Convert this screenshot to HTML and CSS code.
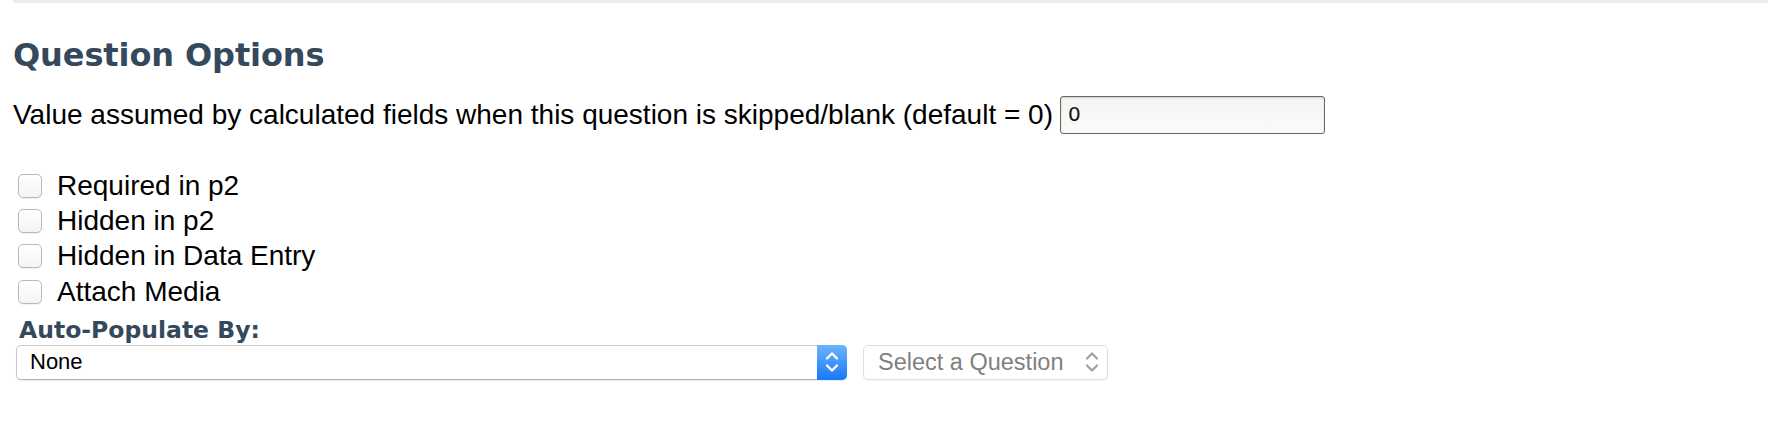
FILE: index.html
```html
<!DOCTYPE html>
<html>
<head>
<meta charset="utf-8">
<link rel="stylesheet" href="styles.css">
</head>
<body>
<div class="panel">
  <div class="topline"></div>
  <h2 class="title">Question Options</h2>
  <div class="value-row">
    <span class="value-label">Value assumed by calculated fields when this question is skipped/blank (default = 0)</span>
    <span class="text-input">0</span>
  </div>
  <ul class="checks">
    <li class="check-item"><span class="cb"></span><span class="check-label">Required in p2</span></li>
    <li class="check-item"><span class="cb"></span><span class="check-label">Hidden in p2</span></li>
    <li class="check-item"><span class="cb"></span><span class="check-label">Hidden in Data Entry</span></li>
    <li class="check-item"><span class="cb"></span><span class="check-label">Attach Media</span></li>
  </ul>
  <div class="sublabel">Auto-Populate By:</div>
  <div class="selects">
    <div class="select primary">
      <span class="select-text">None</span>
      <span class="arrow-box">
        <svg width="16" height="26" viewBox="0 0 16 26"><path d="M3 9.5 L8 4.5 L13 9.5 M3 16.5 L8 21.5 L13 16.5" fill="none" stroke="#fff" stroke-width="2.4" stroke-linecap="round" stroke-linejoin="round"/></svg>
      </span>
    </div>
    <div class="select secondary">
      <span class="select-text muted">Select a Question</span>
      <span class="arrow-plain">
        <svg width="16" height="26" viewBox="0 0 16 26"><path d="M3 9.5 L8 4.5 L13 9.5 M3 16.5 L8 21.5 L13 16.5" fill="none" stroke="#a0a0a0" stroke-width="2.2" stroke-linecap="round" stroke-linejoin="round"/></svg>
      </span>
    </div>
  </div>
</div>
</body>
</html>
```

FILE: styles.css
```css
html, body {
  margin: 0;
  padding: 0;
  background: #ffffff;
}

body {
  font-family: "Liberation Sans", Arial, sans-serif;
  color: #000;
  width: 1768px;
  height: 424px;
  overflow: hidden;
}

.panel {
  padding-left: 13px;
}

.topline {
  height: 0;
  border-top: 3px solid #ececec;
}

.title {
  font-family: "DejaVu Sans", Verdana, sans-serif;
  font-weight: bold;
  font-size: 32px;
  line-height: 38px;
  color: #34495b;
  margin: 33px 0 0 0;
  letter-spacing: -0.1px;
}

.value-row {
  display: flex;
  align-items: center;
  height: 38px;
  margin-top: 22px;
  font-size: 28px;
}

.value-label {
  line-height: 32px;
}

.text-input {
  box-sizing: border-box;
  width: 265px;
  height: 38px;
  margin-left: 7px;
  border: 1.5px solid #666;
  border-radius: 3px;
  background: linear-gradient(#f3f3f1, #fbfbfa);
  box-shadow: inset 0 1px 2px rgba(0,0,0,0.15);
  font-family: "DejaVu Sans", sans-serif;
  font-size: 20px;
  line-height: 35px;
  padding-left: 7px;
  color: #111;
}

.checks {
  list-style: none;
  margin: 34px 0 0 0;
  padding: 0;
}

.check-item {
  display: flex;
  align-items: center;
  height: 35.4px;
  font-size: 28px;
}

.cb {
  box-sizing: border-box;
  width: 24px;
  height: 24px;
  margin-left: 5px;
  border: 1px solid #b9b9b9;
  border-radius: 5px;
  background: linear-gradient(#ffffff, #f4f4f4);
  box-shadow: 0 1px 1px rgba(0,0,0,0.06);
}

.check-label {
  margin-left: 15px;
  line-height: 32px;
}

.sublabel {
  font-family: "DejaVu Sans", Verdana, sans-serif;
  font-weight: bold;
  font-size: 23.5px;
  line-height: 28px;
  color: #34495b;
  margin-top: 6px;
  padding-left: 6px;
}

.selects {
  display: flex;
  gap: 16px;
  margin-top: 1px;
  padding-left: 3px;
}

.select {
  box-sizing: border-box;
  height: 35px;
  display: flex;
  align-items: center;
  border-radius: 5px;
  background: #fff;
}

.select.primary {
  width: 831px;
  border: 1px solid #c8c8c8;
  border-bottom-color: #b0b0b0;
  box-shadow: 0 1px 1px rgba(0,0,0,0.08);
}

.select.secondary {
  width: 245px;
  border: 1px solid #dedede;
  box-shadow: 0 1px 1px rgba(0,0,0,0.04);
}

.select-text {
  flex: 1;
  font-size: 22px;
  padding-left: 13px;
  color: #000;
}

.select-text.muted {
  color: #808080;
  font-size: 23.5px;
  padding-left: 14px;
}

.arrow-box {
  align-self: stretch;
  width: 30px;
  margin: -1px -1px -1px 0;
  border-radius: 0 5px 5px 0;
  background: linear-gradient(#6fb4fb, #1778f7);
  display: flex;
  align-items: center;
  justify-content: center;
}

.arrow-plain {
  width: 30px;
  display: flex;
  align-items: center;
  justify-content: center;
}
```
